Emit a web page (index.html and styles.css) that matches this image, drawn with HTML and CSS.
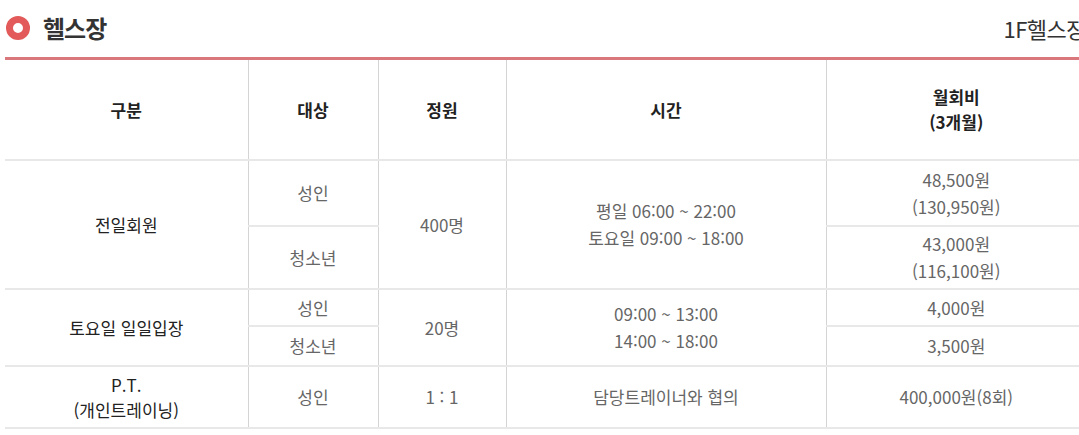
FILE: index.html
```html
<!DOCTYPE html>
<html lang="ko">
<head>
<meta charset="utf-8">
<title>헬스장</title>
<link rel="stylesheet" href="styles.css">
</head>
<body>
<div class="wrap">
  <div class="title-bar">
    <h2 class="title"><span class="dot"></span>헬스장</h2>
    <span class="loc">1F헬스장</span>
  </div>
  <table class="tbl">
    <colgroup>
      <col class="c1"><col class="c2"><col class="c3"><col class="c4"><col class="c5">
    </colgroup>
    <thead>
      <tr class="h-row">
        <th>구분</th>
        <th>대상</th>
        <th>정원</th>
        <th>시간</th>
        <th>월회비<br>(3개월)</th>
      </tr>
    </thead>
    <tbody>
      <tr class="r1a">
        <td class="name" rowspan="2">전일회원</td>
        <td>성인</td>
        <td rowspan="2">400명</td>
        <td rowspan="2" class="ml">평일 06:00 ~ 22:00<br>토요일 09:00 ~ 18:00</td>
        <td class="ml">48,500원<br>(130,950원)</td>
      </tr>
      <tr class="r1b">
        <td>청소년</td>
        <td class="ml">43,000원<br>(116,100원)</td>
      </tr>
      <tr class="r2a">
        <td class="name" rowspan="2">토요일 일일입장</td>
        <td>성인</td>
        <td rowspan="2">20명</td>
        <td rowspan="2" class="ml">09:00 ~ 13:00<br>14:00 ~ 18:00</td>
        <td>4,000원</td>
      </tr>
      <tr class="r2b">
        <td>청소년</td>
        <td>3,500원</td>
      </tr>
      <tr class="r3">
        <td class="name pt">P.T.<br>(개인트레이닝)</td>
        <td>성인</td>
        <td>1 : 1</td>
        <td>담당트레이너와 협의</td>
        <td>400,000원(8회)</td>
      </tr>
    </tbody>
  </table>
</div>
</body>
</html>
```

FILE: styles.css
```css
html, body {
  margin: 0;
  padding: 0;
  background: #fff;
  overflow: hidden;
}
body {
  font-family: "Noto Sans CJK KR", "Noto Sans", sans-serif;
  color: #666;
}
.wrap {
  width: 1081px;
  padding-left: 5px;
}
.title-bar {
  display: flex;
  align-items: center;
  justify-content: space-between;
  height: 55px;
  padding-bottom: 2px;
}
.title {
  display: flex;
  align-items: center;
  margin: 0;
  font-size: 24px;
  font-weight: 700;
  color: #333;
  letter-spacing: -1px;
}
.dot {
  box-sizing: border-box;
  width: 24px;
  height: 24px;
  border-radius: 50%;
  border: 7px solid #e25a5a;
  margin: 0 13px 0 1px;
}
.loc {
  font-size: 22px;
  color: #333;
  letter-spacing: -0.5px;
}
.tbl {
  width: 1081px;
  table-layout: fixed;
  border-collapse: collapse;
  border-top: 3px solid #d9777c;
  text-align: center;
  font-size: 17px;
}
.c1 { width: 243px; }
.c2 { width: 130px; }
.c3 { width: 128px; }
.c4 { width: 320px; }
.c5 { width: 260px; }
.tbl th, .tbl td {
  padding: 0;
  border-left: 1px solid #d4d4d4;
  border-bottom: 2px solid #e8e8e8;
  line-height: 27px;
  vertical-align: middle;
}
.tbl th:first-child, .tbl td.name {
  border-left: none;
}
.tbl th {
  font-weight: 700;
  color: #222;
  font-size: 17px;
  line-height: 25px;
}
.tbl td.name {
  color: #222;
}
.tbl td.pt {
  line-height: 25px;
}
.h-row { height: 101px; }
.r1a { height: 66px; }
.r1b { height: 63px; }
.r2a { height: 37px; }
.r2b { height: 40px; }
.r3 { height: 62px; }
```
